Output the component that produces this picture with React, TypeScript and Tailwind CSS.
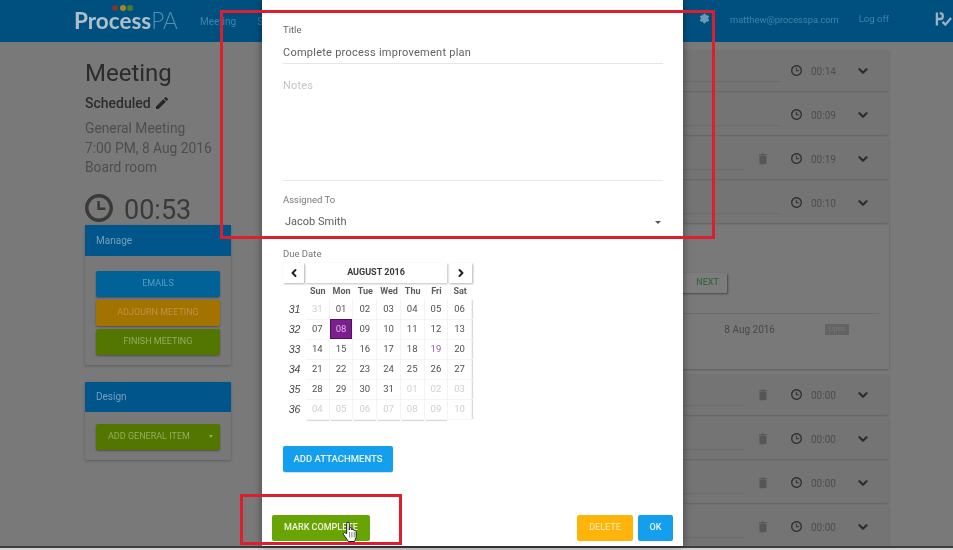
import { ChevronDown, ChevronLeft, ChevronRight, Settings } from "lucide-react";

const font = "font-['Roboto','Liberation_Sans',sans-serif]";

function ClockIcon({ className }: { className: string }) {
  return (
    <svg viewBox="2 2 20 20" className={className} fill="currentColor">
      <path d="M11.99 2C6.47 2 2 6.48 2 12s4.47 10 9.99 10C17.52 22 22 17.52 22 12S17.52 2 11.99 2zM12 19.5c-4.14 0-7.5-3.36-7.5-7.5S7.86 4.5 12 4.5s7.5 3.36 7.5 7.5-3.36 7.5-7.5 7.5z" />
      <path d="M10.8 7h1.8v4.6h4v1.8h-5.8z" />
    </svg>
  );
}

function TrashIcon() {
  return (
    <svg viewBox="0 0 24 24" className="w-[14px] h-[14px] text-[#565656]" fill="currentColor">
      <path d="M6 19c0 1.1.9 2 2 2h8c1.1 0 2-.9 2-2V7H6v12zM19 4h-3.5l-1-1h-5l-1 1H5v2h14V4z" />
    </svg>
  );
}

function PencilIcon() {
  return (
    <svg viewBox="0 0 24 24" className="w-[16px] h-[16px] text-[#262626]" fill="currentColor">
      <path d="M3 17.25V21h3.75L17.81 9.94l-3.75-3.75L3 17.25zM20.71 7.04c.39-.39.39-1.02 0-1.41l-2.34-2.34c-.39-.39-1.02-.39-1.41 0l-1.83 1.83 3.75 3.75 1.83-1.83z" />
    </svg>
  );
}

function HandCursor() {
  return (
    <svg viewBox="0 0 16 22" className="absolute left-[342px] top-[521px] w-[17px] h-[22px]">
      <path
        d="M4.2 12.5V2.6c0-1.9 2.6-1.9 2.6 0V9l.1-1.3c.2-1.4 2.2-1.3 2.4.1V9c.3-1.2 2.1-1.1 2.3.2v.8c.4-.9 2-.7 2.1.6v4.6c0 2.6-1.3 3.6-1.7 5.3H5.7c-.5-1.8-1.8-2.6-3-4.6L1 13.6c-.8-1.5 1-2.7 2.1-1.5z"
        fill="#ffffff"
        stroke="#1c1c1c"
        strokeWidth="1"
        strokeLinejoin="round"
      />
      <path d="M7 11v5.5M9.4 11v5.5M11.8 11v5.5" stroke="#555555" strokeWidth="0.7" />
    </svg>
  );
}

function Logo() {
  return (
    <div className="relative w-[104px] h-[42px] ml-[74px] shrink-0">
      <div className="absolute left-[38px] top-[5px] flex gap-[1.5px]">
        <span className="w-[6px] h-[6px] rounded-full bg-[#803530]" />
        <span className="w-[6px] h-[6px] rounded-full bg-[#a38625]" />
        <span className="w-[6px] h-[6px] rounded-full bg-[#4d7a28]" />
      </div>
      <div className="absolute left-0 top-[8px] text-[22.5px] leading-[26px] whitespace-nowrap font-['Lato','Liberation_Sans',sans-serif]">
        <span className="font-bold text-[#aebfca]">Process</span>
        <span className="font-light text-[#548fb3]">PA</span>
      </div>
    </div>
  );
}

function Header() {
  return (
    <div className="h-[42px] bg-[#00507f] flex items-center shrink-0 text-[10px] text-[#3f83ab]">
      <Logo />
      <span className="ml-[22px]">Meeting</span>
      <span className="ml-[21px]">Setup</span>
      <div className="flex-1" />
      <Settings size={11} className="mr-[20px] -mt-[5px] text-[#6f9ab5]" fill="#6f9ab5" />
      <span className="-mt-[3px] text-[9.3px]">matthew@processpa.com</span>
      <span className="ml-[20px] -mt-[3px] text-[9.5px]">Log off</span>
      <svg viewBox="0 0 18 16" className="ml-[46px] mr-[1px] -mt-[4px] w-[17px] h-[16px]" fill="none" stroke="#9db3c1" strokeWidth="2.4">
        <path d="M2 1v14M2 8h4c3 0 3-6 0-6H5" />
        <path d="M8 11l3 3 6-7" />
      </svg>
    </div>
  );
}

function SideButton({ label, className }: { label: string; className: string }) {
  return (
    <div className={`h-[26px] rounded-[2px] flex items-center justify-center text-[9px] shadow-[0_1px_2px_rgba(0,0,0,0.35)] ${className}`}>
      {label}
    </div>
  );
}

function LeftColumn() {
  return (
    <div className="w-[146px] shrink-0 pt-[16px] text-[#2c2c2c]">
      <div className="text-[24px] leading-[30px] text-[#2b2b2b]">Meeting</div>
      <div className="mt-[5px] h-[20px] flex items-center gap-[3px] text-[14px] font-medium">
        Scheduled <PencilIcon />
      </div>
      <div className="mt-[6px] text-[13.8px] leading-[19.5px] text-[#4e4e4e]">
        <div>General Meeting</div>
        <div>7:00 PM, 8 Aug 2016</div>
        <div>Board room</div>
      </div>
      <div className="mt-[16px] h-[28px] flex items-center text-[#3a3a3a]">
        <ClockIcon className="w-[28px] h-[28px]" />
        <span className="ml-[11px] mt-[5px] text-[27px] leading-[28px]">00:53</span>
      </div>
      <div className="mt-[3px] bg-[#787878] rounded-[2px] shadow-[0_1px_3px_rgba(0,0,0,0.25)]">
        <div className="h-[31px] bg-[#00558a] flex items-center px-[11px] text-[10px] text-[#6fa0bd]">Manage</div>
        <div className="px-[11px] pt-[15px] pb-[10px] flex flex-col gap-[3px]">
          <SideButton label="EMAILS" className="bg-[#006296] text-[#5a9dc4]" />
          <SideButton label="ADJOURN MEETING" className="bg-[#a37300] text-[#bd9340]" />
          <SideButton label="FINISH MEETING" className="bg-[#527600] text-[#91ae60]" />
        </div>
      </div>
      <div className="mt-[17px] bg-[#787878] rounded-[2px] shadow-[0_1px_3px_rgba(0,0,0,0.25)]">
        <div className="h-[30px] bg-[#00558a] flex items-center px-[11px] text-[10px] text-[#6fa0bd]">Design</div>
        <div className="px-[11px] pt-[12px] pb-[10px]">
          <div className="h-[26px] rounded-[2px] bg-[#527600] text-[#91ae60] text-[9px] flex items-center pl-[12px] shadow-[0_1px_2px_rgba(0,0,0,0.35)]">
            ADD GENERAL ITEM
            <span className="ml-[19px] w-0 h-0 border-x-[2.5px] border-x-transparent border-t-[3px] border-t-[#91ae60]" />
          </div>
        </div>
      </div>
    </div>
  );
}

function ItemRow({ time, trash, underline }: { time: string; trash?: boolean; underline: string }) {
  return (
    <div className="h-[41px] mb-[3px] bg-[#747474] shadow-[0_1px_2px_rgba(0,0,0,0.2)] flex items-center relative">
      <div className={`absolute left-0 top-[31px] h-px bg-[#6c6c6c] ${underline}`} />
      <div className="flex-1" />
      {trash && <TrashIcon />}
      <ClockIcon className={`${trash ? "ml-[21px]" : "ml-[19px]"} w-[11px] h-[11px] text-[#333333]`} />
      <span className="ml-[9px] mt-[1px] w-[24px] text-[10px] text-[#4e4e4e]">{time}</span>
      <ChevronDown size={14} strokeWidth={4} className="ml-[21px] mr-[19px] text-[#2e2e2e]" />
    </div>
  );
}

function ExpandedPanel() {
  return (
    <div className="h-[146px] mb-[5px] -mt-[3px] bg-[#797979] shadow-[0_1px_2px_rgba(0,0,0,0.25)] flex flex-col">
      <div className="h-[50px] shrink-0" />
      <div className="flex justify-end pr-[162px]">
        <div className="w-[60px] h-[20px] bg-[#7d7d7d] rounded-[1px] shadow-[1px_1px_2px_rgba(0,0,0,0.4)] flex items-center justify-end pr-[8px] text-[9px] font-medium text-[#37693f]">
          NEXT
        </div>
      </div>
      <div className="mt-[20px] mr-[10px] h-px bg-[#6c6c6c]" />
      <div className="mt-[8px] flex items-center justify-end pr-[40px] text-[10px] text-[#484848]">
        <span>8 Aug 2016</span>
        <span className="ml-[50px] w-[24px] h-[11px] bg-[#636363] text-[7px] leading-[11px] text-center text-[#787878]">Open</span>
      </div>
    </div>
  );
}

function RightColumn() {
  return (
    <div className="ml-[60px] w-[598px] shrink-0 pt-[8px]">
      <ItemRow time="00:14" underline="w-[489px]" />
      <ItemRow time="00:09" underline="w-[489px]" />
      <ItemRow time="00:19" trash underline="w-[454px]" />
      <ItemRow time="00:10" underline="w-[489px]" />
      <ExpandedPanel />
      <ItemRow time="00:00" trash underline="w-[454px]" />
      <ItemRow time="00:00" trash underline="w-[454px]" />
      <ItemRow time="00:00" trash underline="w-[454px]" />
      <ItemRow time="00:00" trash underline="w-[454px]" />
    </div>
  );
}

const weeks = [
  { num: "31", days: ["31", "01", "02", "03", "04", "05", "06"] },
  { num: "32", days: ["07", "08", "09", "10", "11", "12", "13"] },
  { num: "33", days: ["14", "15", "16", "17", "18", "19", "20"] },
  { num: "34", days: ["21", "22", "23", "24", "25", "26", "27"] },
  { num: "35", days: ["28", "29", "30", "31", "01", "02", "03"] },
  { num: "36", days: ["04", "05", "06", "07", "08", "09", "10"] },
];

function dayColor(week: number, day: number) {
  if (week === 1 && day === 1) return "bg-[#7b1e8e] text-[#e0b5e8] shadow-[inset_0_0_0_1px_#4d1259]";
  if (week === 2 && day === 5) return "text-[#9c5aa8]";
  if (week === 0 && day === 0) return "text-[#cfcfcf]";
  if (week === 4 && day > 3) return "text-[#cfcfcf]";
  if (week === 5) return "text-[#cfcfcf]";
  return "text-[#505050]";
}

function Calendar() {
  return (
    <div className="mt-[3px] w-[189px] text-[9.5px]">
      <div className="flex h-[20px] gap-[1px]">
        <div className="w-[21px] flex items-center justify-center shadow-[1px_1px_2px_rgba(0,0,0,0.3)]">
          <ChevronLeft size={12} strokeWidth={4} className="text-[#222222]" />
        </div>
        <div className="flex-1 flex items-center justify-center font-bold text-[9px] text-[#3a3a3a] shadow-[1px_1px_2px_rgba(0,0,0,0.25)]">
          AUGUST 2016
        </div>
        <div className="ml-[1px] w-[23px] flex items-center justify-center shadow-[1px_1px_2px_rgba(0,0,0,0.3)]">
          <ChevronRight size={12} strokeWidth={4} className="text-[#222222]" />
        </div>
      </div>
      <div className="grid grid-cols-[23px_repeat(7,1fr)] h-[16px] mt-[1px] -mb-[1px] items-center text-center font-bold text-[9px] text-[#5c5c5c]">
        <span />
        {["Sun", "Mon", "Tue", "Wed", "Thu", "Fri", "Sat"].map((d) => (
          <span key={d}>{d}</span>
        ))}
      </div>
      {weeks.map((week, w) => (
        <div key={week.num} className="grid grid-cols-[23px_repeat(7,1fr)] h-[20px] items-stretch text-center">
          <span className="italic text-[10.5px] leading-[20px] text-[#444444] font-['Liberation_Sans',sans-serif]">{week.num}</span>
          {week.days.map((day, d) => (
            <span
              key={d}
              className={`leading-[20px] border-r border-b border-[#f4f4f4] ${w === 5 ? "shadow-[0_2px_1px_-1px_rgba(0,0,0,0.14)]" : ""} ${d === 6 ? "shadow-[2px_0_1px_-1px_rgba(0,0,0,0.14)]" : ""} ${dayColor(w, d)}`}
            >
              {day}
            </span>
          ))}
        </div>
      ))}
    </div>
  );
}

function Modal() {
  return (
    <div className="absolute left-[262px] top-0 w-[421px] h-[546px] bg-white shadow-[0_0_8px_rgba(0,0,0,0.45)] flex flex-col">
      <div className="flex-1 pl-[21px] pr-[20px] pt-[24px]">
        <div className="text-[9.5px] leading-[12px] text-[#666666]">Title</div>
        <div className="mt-[10px] h-[18px] text-[11px] leading-[14px] tracking-[0.25px] text-[#616161] border-b border-[#e6e6e6]">
          Complete process improvement plan
        </div>
        <div className="mt-[15px] h-[102px] text-[11px] leading-[14px] text-[#c4c4c4] tracking-[0.2px] border-b border-[#e9e9e9]">Notes</div>
        <div className="mt-[13px] text-[9.5px] leading-[12px] text-[#777777]">Assigned To</div>
        <div className="mt-[8px] h-[16px] flex items-center justify-between pl-[2px] pr-[2px] text-[11px] text-[#5e5e5e]">
          Jacob Smith
          <span className="w-0 h-0 border-x-[3px] border-x-transparent border-t-[3px] border-t-[#555555]" />
        </div>
        <div className="mt-[18px] text-[9.5px] leading-[12px] text-[#777777]">Due Date</div>
        <Calendar />
        <div className="mt-[27px] w-[110px] h-[26px] rounded-[2px] bg-[#149fee] text-[#eaf6fd] text-[9.5px] font-medium flex items-center justify-center shadow-[0_1px_1px_rgba(0,0,0,0.15)]">
          ADD ATTACHMENTS
        </div>
      </div>
      <div className="h-[31px] pl-[10px] pr-[10px] flex items-start gap-[5px] text-[9px] font-medium">
        <div className="w-[98px] h-[26px] rounded-[2px] bg-[#69a405] text-[#eef5e0] flex items-center justify-center">MARK COMPLETE</div>
        <div className="flex-1" />
        <div className="w-[56px] h-[26px] rounded-[2px] bg-[#ffb40a] text-[#ffe29a] flex items-center justify-center">DELETE</div>
        <div className="w-[35px] h-[26px] rounded-[2px] bg-[#149fee] text-[#eaf6fd] flex items-center justify-center">OK</div>
      </div>
    </div>
  );
}

export default function App() {
  return (
    <div className={`relative w-[953px] h-[550px] overflow-hidden bg-[#797979] blur-[0.4px] ${font}`}>
      <Header />
      <div className="h-[504px] overflow-hidden flex pl-[85px]">
        <LeftColumn />
        <RightColumn />
      </div>
      <div className="h-[4px] bg-[#d4d4d4] border-t-2 border-[#3d3d3d]" />
      <Modal />
      {/* annotation boxes drawn over the screenshot */}
      <div className="absolute left-[220px] top-[10px] w-[495px] h-[229px] border-[3.5px] border-[#dc1f2e]" />
      <div className="absolute left-[240px] top-[494px] w-[162px] h-[51px] border-[3.5px] border-[#dc1f2e]" />
      <HandCursor />
    </div>
  );
}
